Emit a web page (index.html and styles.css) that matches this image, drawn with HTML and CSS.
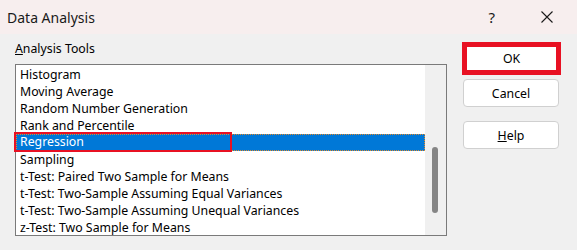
FILE: index.html
```html
<!DOCTYPE html>
<html lang="en">
<head>
    <meta charset="UTF-8">
    <title>Data Analysis</title>
    <link rel="stylesheet" href="styles.css">
</head>
<body>
    <div class="dialog">
        <div class="titlebar">
            <span class="title">Data Analysis</span>
            <span class="help-glyph">?</span>
            <span class="close">
                <svg width="12" height="12" viewBox="0 0 12 12">
                    <path d="M0.5 0.5 L11.5 11.5 M11.5 0.5 L0.5 11.5" stroke="#1a1a1a" stroke-width="1.1" fill="none"/>
                </svg>
            </span>
        </div>
        <div class="content">
            <div class="tools">
                <div class="label"><u>A</u>nalysis Tools</div>
                <div class="listbox">
                    <ul class="items">
                        <li>Histogram</li>
                        <li>Moving Average</li>
                        <li>Random Number Generation</li>
                        <li>Rank and Percentile</li>
                        <li class="selected"><span class="mark">Regression</span></li>
                        <li>Sampling</li>
                        <li>t-Test: Paired Two Sample for Means</li>
                        <li>t-Test: Two-Sample Assuming Equal Variances</li>
                        <li>t-Test: Two-Sample Assuming Unequal Variances</li>
                        <li>z-Test: Two Sample for Means</li>
                    </ul>
                    <div class="scrollbar"><div class="thumb"></div></div>
                </div>
            </div>
            <div class="buttons">
                <div class="ok-mark"><button class="btn ok">OK</button></div>
                <button class="btn cancel">Cancel</button>
                <button class="btn help"><u>H</u>elp</button>
            </div>
        </div>
    </div>
</body>
</html>
```

FILE: styles.css
```css
* {
    box-sizing: border-box;
    margin: 0;
    padding: 0;
}

body {
    font-family: "Noto Sans", "Open Sans", sans-serif;
    background: #f0f0f0;
    color: #000;
}

.dialog {
    width: 577px;
    height: 250px;
    overflow: hidden;
}

/* Title bar */
.titlebar {
    height: 34px;
    background: #f7eeee;
    display: flex;
    align-items: center;
    padding-left: 7px;
}

.title {
    font-size: 14px;
    color: #1a1a1a;
    flex: 1;
}

.help-glyph {
    font-size: 15px;
    color: #1a1a1a;
    margin-right: 46px;
}

.close {
    display: flex;
    margin-right: 24px;
}

/* Main area */
.content {
    display: flex;
    padding: 8px 0 0 15px;
}

.tools {
    width: 432px;
}

.label {
    font-size: 12.3px;
    height: 22px;
    line-height: 14px;
}

.listbox {
    display: flex;
    height: 172px;
    border: 1px solid #7a7a7a;
    background: #fff;
}

.items {
    list-style: none;
    flex: 1;
    padding-top: 1px;
}

.items li {
    height: 17px;
    line-height: 17px;
    font-size: 12.3px;
    padding-left: 4px;
    white-space: nowrap;
    position: relative;
}

.items li.selected {
    background: #0078d7;
    color: #fff;
    outline: 1px dotted #e08a2c;
    outline-offset: -1px;
}

.mark {
    position: absolute;
    left: -2px;
    top: -2px;
    width: 218px;
    height: 20px;
    border: 2px solid #e81123;
    padding-left: 4px;
    line-height: 16px;
}

.scrollbar {
    width: 21px;
    background: #f0f0f0;
    padding: 82px 0 0 7px;
}

.thumb {
    width: 6px;
    height: 66px;
    background: #858585;
    border-radius: 3px;
}

/* Buttons */
.buttons {
    display: flex;
    flex-direction: column;
    margin-left: 15px;
    width: 99px;
}

.btn {
    font-family: "Noto Sans", "Open Sans", sans-serif;
    font-size: 12.3px;
    color: #000;
    background: #fff;
    border: 1px solid #d0d0d0;
    border-radius: 4px;
    height: 28px;
    width: 96px;
    margin-left: 1px;
}

.ok-mark {
    border: 5px solid #e81123;
    background: #fff;
    height: 33px;
    width: 99px;
    display: flex;
    margin-bottom: 4px;
}

.btn.ok {
    border: none;
    width: 100%;
    height: 100%;
    margin: 0;
    border-radius: 0;
    background: #fff;
}

.btn.help {
    margin-top: 14px;
}
```
